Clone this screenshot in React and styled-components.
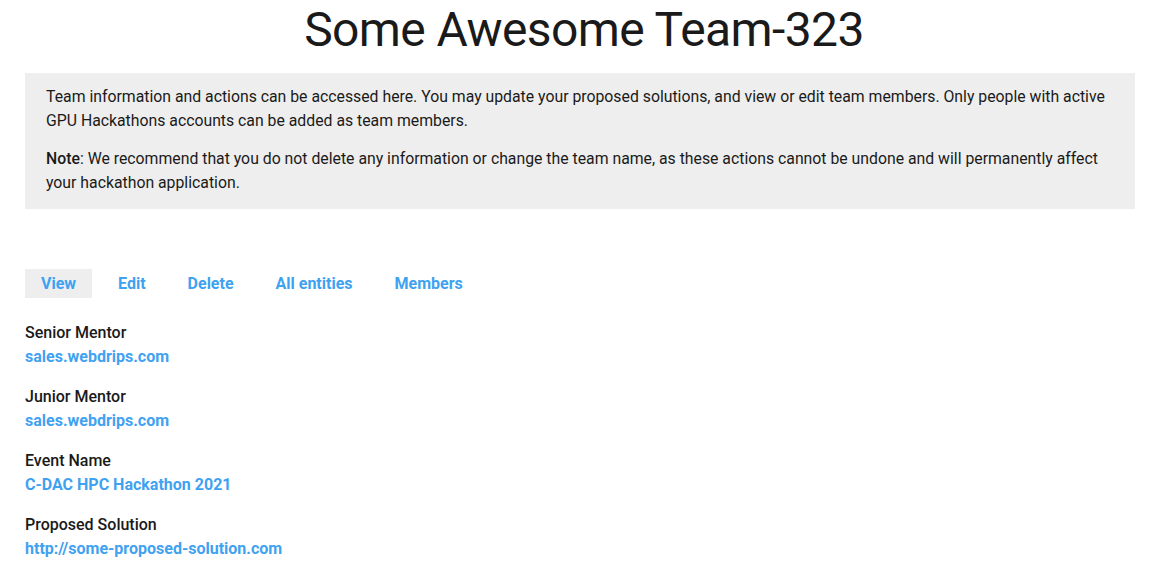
import React from "react";
import styled, { createGlobalStyle } from "styled-components";

const GlobalStyle = createGlobalStyle`
    body {
        margin: 0;
        background: #ffffff;
        font-family: Roboto, "Liberation Sans", sans-serif;
        color: #1a1a1a;
    }
`;

const Page = styled.div`
    width: 1110px;
    padding: 0 25px;
    box-sizing: content-box;
`;

const Title = styled.h1`
    margin: 0 0 13px;
    font-size: 48px;
    line-height: 60px;
    font-weight: 400;
    letter-spacing: -0.6px;
    text-align: center;
    color: #1a1a1a;
    padding-left: 8px;
`;

const InfoBox = styled.div`
    background: #eeeeee;
    padding: 12px 21px 14px;
`;

const InfoText = styled.p`
    margin: 0 0 14px;
    font-size: 15.8px;
    line-height: 24px;
    color: #1a1a1a;

    &:last-child {
        margin-bottom: 0;
    }

    strong {
        font-weight: 500;
    }
`;

const Tabs = styled.nav`
    display: flex;
    gap: 10px;
    margin-top: 60px;
`;

const Tab = styled.a`
    padding: 5px 16px;
    font-size: 16px;
    line-height: 19px;
    font-weight: 700;
    color: #3fa2f1;
    text-decoration: none;
    background: ${(p) => (p.$active ? "#eeeeee" : "transparent")};
    cursor: pointer;
`;

const Fields = styled.div`
    display: flex;
    flex-direction: column;
    gap: 16px;
    margin-top: 23px;
`;

const Field = styled.div`
    display: flex;
    flex-direction: column;
`;

const Label = styled.div`
    font-size: 16px;
    line-height: 24px;
    font-weight: 500;
    color: #1a1a1a;
`;

const Value = styled.a`
    font-size: 16px;
    line-height: 24px;
    font-weight: 700;
    color: #3fa2f1;
    text-decoration: none;
`;

const tabs = ["View", "Edit", "Delete", "All entities", "Members"];

const fields = [
    { label: "Senior Mentor", value: "sales.webdrips.com" },
    { label: "Junior Mentor", value: "sales.webdrips.com" },
    { label: "Event Name", value: "C-DAC HPC Hackathon 2021" },
    { label: "Proposed Solution", value: "http://some-proposed-solution.com" },
];

function App() {
    return (
        <>
            <GlobalStyle />
            <Page>
                <Title>Some Awesome Team-323</Title>
                <InfoBox>
                    <InfoText>
                        Team information and actions can be accessed here. You may update your proposed
                        solutions, and view or edit team members. Only people with active GPU Hackathons
                        accounts can be added as team members.
                    </InfoText>
                    <InfoText>
                        <strong>Note</strong>: We recommend that you do not delete any information or change
                        the team name, as these actions cannot be undone and will permanently affect your
                        hackathon application.
                    </InfoText>
                </InfoBox>
                <Tabs>
                    {tabs.map((t, i) => (
                        <Tab key={t} $active={i === 0}>
                            {t}
                        </Tab>
                    ))}
                </Tabs>
                <Fields>
                    {fields.map((f) => (
                        <Field key={f.label}>
                            <Label>{f.label}</Label>
                            <Value>{f.value}</Value>
                        </Field>
                    ))}
                </Fields>
            </Page>
        </>
    );
}

export default App;
